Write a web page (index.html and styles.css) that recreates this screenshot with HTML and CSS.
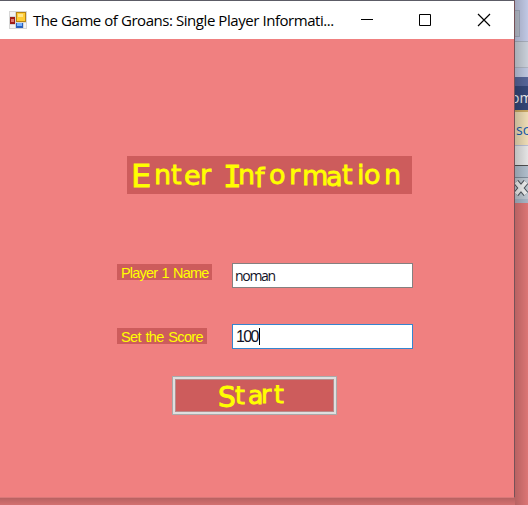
FILE: index.html
```html
<!DOCTYPE html>
<html lang="en">
<head>
<meta charset="utf-8">
<title>The Game of Groans</title>
<link rel="stylesheet" href="styles.css">
</head>
<body>
<div class="desktop">
  <main class="window">
    <header class="titlebar">
      <svg class="app-icon" width="18" height="18" viewBox="0 0 18 18">
        <path fill="#d6d6d6" d="M0 0h18v18H0z"/>
        <path fill="#f3f3f3" d="M1 1h5v4H1zM1 14h5v3H1zM15 12h2v5h-2z"/>
        <path fill="#b88410" d="M7 1h10v10H7z"/>
        <path fill="#ffcc35" d="M8 2h8v8H8z"/>
        <path fill="#ffe68a" d="M9 3h5v3H9z"/>
        <path fill="#9f1c16" d="M1 6h5v7H1z"/>
        <path fill="#df7770" d="M2 8h3v3H2z"/>
        <path fill="#2860bd" d="M7 12h7v5H7z"/>
        <path fill="#78b2ff" d="M8 12h5v3H8z"/>
      </svg>
      <h1 class="caption">The Game of Groans: Single Player Informati...</h1>
      <svg class="controls" width="132" height="14" viewBox="0 0 132 14" fill="none" stroke="#000">
        <path d="M2 6.500h12M60.500 1.500h11v11h-11z"/>
        <path d="M119 1l12 12M131 1l-12 12" stroke-width="1.200"/>
      </svg>
    </header>
    <section class="form">
      <svg class="heading" width="285" height="38" viewBox="0 0 285 38">
        <text class="fancy" y="31 28 28 29 28 28 31 28 31 28 28 29 30 28 28 28 28" x="4 27 44 57 73 88 96 111 128 142 162 175 199 215 230 237 257"><tspan class="cap">E</tspan><tspan>nter </tspan><tspan class="cap slab">I</tspan><tspan>nformation</tspan></text>
      </svg>
      <div class="row row-name">
        <label class="tag tag-name" for="name">Player 1 Name</label>
        <div class="field" id="name">noman</div>
      </div>
      <div class="row row-score">
        <label class="tag tag-score" for="score">Set the Score</label>
        <div class="field focused" id="score">100<span class="caret"></span></div>
      </div>
      <button class="start">
        <svg width="163" height="37" viewBox="0 0 163 37">
          <text class="fancy small" x="45 62 75 88 101" y="30 27 27 26 26"><tspan class="cap-small">S</tspan><tspan>tart</tspan></text>
        </svg>
      </button>
    </section>
  </main>
  <aside class="behind">
    <div class="strip toolbar"><span class="toolbar-button"></span></div>
    <div class="strip pale"></div>
    <div class="strip gap"></div>
    <div class="strip blue"></div>
    <div class="strip navy"><span>om</span></div>
    <div class="strip cream"><span>sc</span></div>
    <div class="strip white"></div>
    <div class="strip steel"></div>
    <div class="strip close">
      <svg width="13" height="18" viewBox="0 0 13 18"><path d="M1 3l10 12M11 3L1 15" stroke="#555b63" stroke-width="6"/><path d="M1 3l10 12M11 3L1 15" stroke="#fff" stroke-width="4"/></svg>
    </div>
    <div class="strip coral"></div>
  </aside>
</div>
</body>
</html>
```
FILE: styles.css
```css
* { box-sizing: border-box; }
body {
  margin: 0;
  width: 528px;
  height: 505px;
  overflow: hidden;
  font-family: "Open Sans", "Noto Sans", sans-serif;
  background: linear-gradient(#b46060 497px, #d37070 505px);
}
.desktop { display: flex; height: 505px; }
.window {
  width: 515px;
  height: 498px;
  flex: none;
  border-top: 1px solid #5c5c66;
  border-right: 1px solid #765157;
  border-bottom: 1px solid #d97979;
  background: #f08080;
}
.titlebar {
  display: flex;
  align-items: center;
  height: 38px;
  padding-left: 9px;
  background: #fff;
}
.app-icon { flex: none; }
.caption {
  width: 302px;
  margin: 0 0 0 6px;
  font: 400 15px/20px "Open Sans", sans-serif;
  letter-spacing: -0.44px;
  white-space: nowrap;
  color: #000;
}
.controls { margin-left: 24px; flex: none; }
.form {
  display: flex;
  flex-direction: column;
  align-items: flex-start;
  padding-top: 117px;
}
.heading { margin-left: 127px; background: #cd5c5c; }
.fancy {
  font: 400 27px "DejaVu Sans", sans-serif;
  fill: #ff0;
  stroke: #ff0;
  stroke-width: .8px;
}
.cap { font-size: 32px; }
.slab { font-family: "DejaVu Sans Mono", monospace; font-size: 31px; }
.small { font-size: 25px; stroke-width: .9px; }
.cap-small { font-size: 28px; }
.row { display: flex; margin-left: 117px; }
.row-name { margin-top: 69px; }
.row-score { margin-top: 36px; }
.tag {
  height: 16px;
  margin-top: 1px;
  padding-left: 4px;
  background: #cd5c5c;
  color: #ff0;
  font-family: "Liberation Sans", sans-serif;
  font-size: 14.5px;
  line-height: 18px;
  letter-spacing: -0.8px;
  word-spacing: 1px;
  white-space: nowrap;
}
.tag-name { width: 95px; margin-right: 20px; }
.tag-score { width: 90px; margin-top: 4px; margin-right: 25px; letter-spacing: -0.6px; }
.field {
  display: flex;
  align-items: center;
  width: 181px;
  height: 25px;
  padding-left: 2px;
  border: 1px solid #858080;
  background: #fff;
  color: #111126;
  font-size: 14px;
  letter-spacing: -1.3px;
}
.focused { padding-left: 3px; border-color: #3585cf; font-family: "Liberation Sans", sans-serif; font-size: 16px; letter-spacing: -1.6px; }
.caret { width: 1px; height: 17px; margin-left: 1px; background: #000; }
.start {
  width: 165px;
  height: 39px;
  margin: 27px 0 0 172px;
  padding: 0;
  border: 1px solid #aaa9a9;
  background: #cd5c5c;
  box-shadow: inset 0 0 0 2px #dfdfdf, inset 0 0 0 3px #b88b8b;
}
.start svg { display: block; }
.behind { position: relative; width: 13px; height: 505px; overflow: hidden; }
.behind::after {
  content: "";
  position: absolute;
  inset: 0;
  background: linear-gradient(90deg, rgba(0,0,0,.22), rgba(0,0,0,.07));
}
.strip { overflow: hidden; font-size: 14px; white-space: nowrap; }
.toolbar { height: 41px; padding-top: 10px; background: #cfd7f5; }
.toolbar-button { display: block; width: 5px; height: 27px; border: 1px solid #aeb6c9; border-left: 0; background: #c6cddb; }
.pale { height: 27px; border-top: 1px solid #b4bbc9; border-bottom: 1px solid #bac1cf; background: #d8dfe9; }
.gap { height: 9px; background: #cbd5ef; }
.blue { height: 9px; background: #5b6ca3; }
.navy { height: 24px; line-height: 23px; background: #374b80; color: #fff; }
.navy span { margin-left: -4px; }
.cream { height: 36px; border-top: 2px solid #d9b469; border-bottom: 1px solid #c4cce4; line-height: 36px; background: #ffecc2; color: #1763bd; }
.cream span { margin-left: 1px; }
.white { height: 20px; border-bottom: 1px solid #555; background: #f5f5f5; }
.steel { height: 11px; background: #bdccdb; }
.close { height: 26px; padding-top: 1px; border-top: 1px solid #8997a6; border-bottom: 4px solid #b3c3d4; background: #cbd5df; }
.coral { height: 302px; background: #ec7e7e; }
```
